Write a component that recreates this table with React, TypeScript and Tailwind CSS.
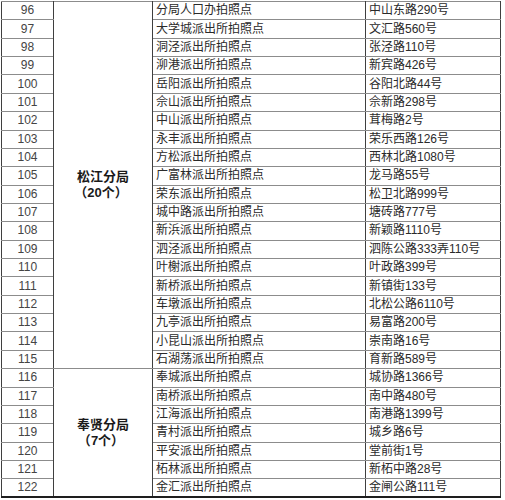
const songjiang: [number, string, string][] = [
  [96, "分局人口办拍照点", "中山东路290号"],
  [97, "大学城派出所拍照点", "文汇路560号"],
  [98, "洞泾派出所拍照点", "张泾路110号"],
  [99, "泖港派出所拍照点", "新宾路426号"],
  [100, "岳阳派出所拍照点", "谷阳北路44号"],
  [101, "佘山派出所拍照点", "佘新路298号"],
  [102, "中山派出所拍照点", "茸梅路2号"],
  [103, "永丰派出所拍照点", "荣乐西路126号"],
  [104, "方松派出所拍照点", "西林北路1080号"],
  [105, "广富林派出所拍照点", "龙马路55号"],
  [106, "荣东派出所拍照点", "松卫北路999号"],
  [107, "城中路派出所拍照点", "塘砖路777号"],
  [108, "新浜派出所拍照点", "新颖路1110号"],
  [109, "泗泾派出所拍照点", "泗陈公路333弄110号"],
  [110, "叶榭派出所拍照点", "叶政路399号"],
  [111, "新桥派出所拍照点", "新镇街133号"],
  [112, "车墩派出所拍照点", "北松公路6110号"],
  [113, "九亭派出所拍照点", "易富路200号"],
  [114, "小昆山派出所拍照点", "崇南路16号"],
  [115, "石湖荡派出所拍照点", "育新路589号"],
];

const fengxian: [number, string, string][] = [
  [116, "奉城派出所拍照点", "城协路1366号"],
  [117, "南桥派出所拍照点", "南中路480号"],
  [118, "江海派出所拍照点", "南港路1399号"],
  [119, "青村派出所拍照点", "城乡路6号"],
  [120, "平安派出所拍照点", "堂前街1号"],
  [121, "柘林派出所拍照点", "新柘中路28号"],
  [122, "金汇派出所拍照点", "金闸公路111号"],
];

const cell = "border border-x-[#3f3f3f] border-y-[#8c8c8c] p-0 align-middle";
const thick = " border-b-2 border-b-[#1e1e1e]";

function Group({
  rows,
  name,
  count,
  last,
}: {
  rows: [number, string, string][];
  name: string;
  count: string;
  last?: boolean;
}) {
  return (
    <>
      {rows.map(([n, place, addr], i) => {
        const bottom = last && i === rows.length - 1 ? thick : "";
        return (
          <tr key={n} className="h-[18.37px]">
            <td className={cell + bottom + " text-center text-[#444]"}>{n}</td>
            {i === 0 && (
              <td
                rowSpan={rows.length}
                className={cell + (last ? thick : "") + " text-center font-bold text-[13px] leading-[16px] text-[#1a1a1a]"}
              >
                <div>{name}</div>
                <div className="-ml-1">（{count}个）</div>
              </td>
            )}
            <td className={cell + bottom + " pl-[3px] whitespace-nowrap"}>{place}</td>
            <td className={cell + bottom + " pl-[3px] whitespace-nowrap"}>{addr}</td>
          </tr>
        );
      })}
    </>
  );
}

export default function App() {
  return (
    <div className="w-[505px] h-[500px] bg-white overflow-hidden pt-px pl-px">
      <table
        className="table-fixed border-collapse w-[500px] text-[12px] leading-[17px] text-[#2a2a2a]"
        style={{ fontFamily: '"Liberation Sans", "Noto Sans CJK SC", sans-serif' }}
      >
        <colgroup>
          <col className="w-[52px]" />
          <col className="w-[99px]" />
          <col className="w-[213px]" />
          <col className="w-[135px]" />
        </colgroup>
        <tbody>
          <Group rows={songjiang} name="松江分局" count="20" />
          <Group rows={fengxian} name="奉贤分局" count="7" last />
        </tbody>
      </table>
    </div>
  );
}
